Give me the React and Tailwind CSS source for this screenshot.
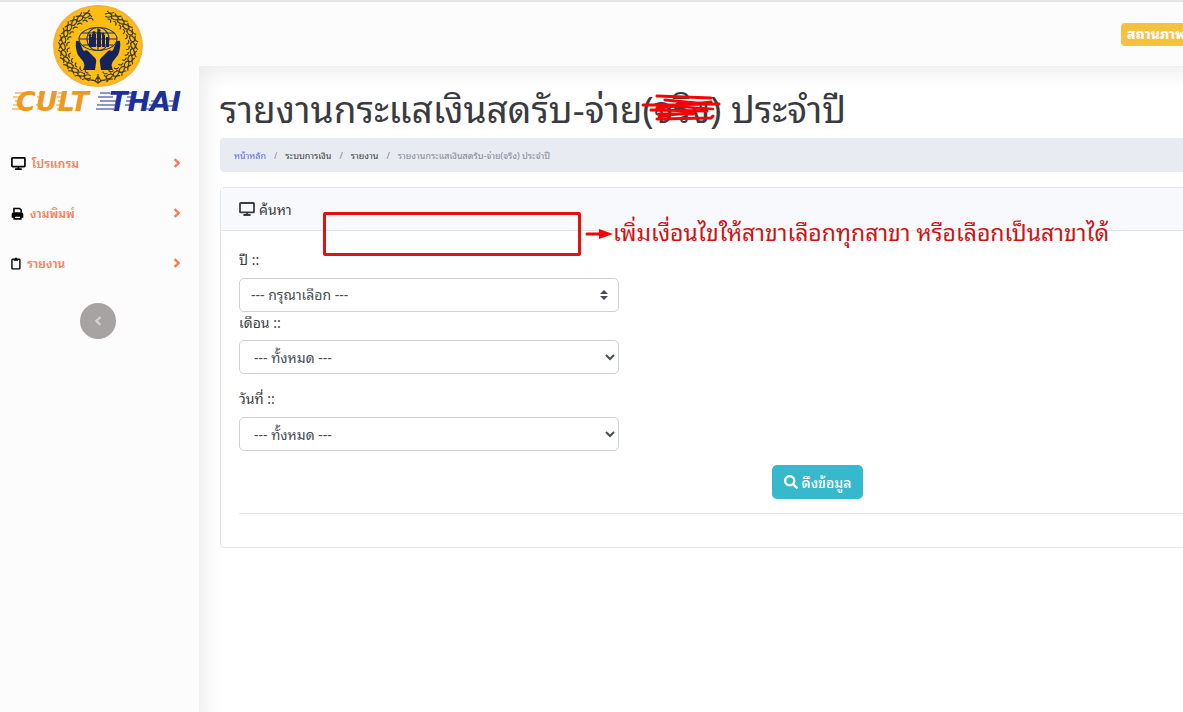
import React from 'react';
import { FaSearch } from 'react-icons/fa';

const menuItems = [
  { label: 'โปรแกรม', icon: 'monitor' },
  { label: 'งามพิมพ์', icon: 'printer' },
  { label: 'รายงาน', icon: 'clipboard' }
];

const MonitorIcon = ({ className }) => (
  <svg viewBox="0 0 16 14" className={className} fill="none" stroke="currentColor" strokeWidth="1.8" aria-hidden="true">
    <rect x="1" y="1" width="14" height="9.4" rx="0.6" />
    <path d="M8 10.4v2.4M4.4 13h7.2" />
  </svg>
);

const PrinterIcon = ({ className }) => (
  <svg viewBox="0 0 14 14" className={className} fill="none" stroke="currentColor" strokeWidth="1.7" aria-hidden="true">
    <path d="M3.2 6V1.6h6l1.8 1.8V6" />
    <path d="M1.6 10.6V7.8Q1.6 6.6 3 6.6h8Q12.4 6.6 12.4 7.8v2.8z" fill="currentColor" />
    <path d="M3.4 9.6h7.2v3.2H3.4z" fill="#fff" />
  </svg>
);

const ClipboardIcon = ({ className }) => (
  <svg viewBox="0 0 11 14" className={className} fill="none" stroke="currentColor" strokeWidth="1.5" aria-hidden="true">
    <rect x="1" y="2.4" width="8.6" height="10.4" rx="0.8" />
    <path d="M3 3.2h4.6M4.4 1.8h1.8" strokeWidth="1.8" />
  </svg>
);

const icons = { monitor: MonitorIcon, printer: PrinterIcon, clipboard: ClipboardIcon };

const Chevron = ({ className }) => (
  <svg viewBox="0 0 8 10" className={className} fill="none" stroke="currentColor" strokeWidth="2.4" aria-hidden="true">
    <path d="M1.6 1.2L5.6 5L1.6 8.8" />
  </svg>
);

// One leaf sprig of the wreath, repeated round the emblem
const leafAngles = [-162, -150, -138, -126, -114, -102, -90, -78, -66, -54, -42, -30, -18, 18, 30, 42, 54, 66, 78, 90, 102, 114, 126, 138, 150, 162];

const Hand = () => (
  <path d="M76 38q3-1 4 2l3 7 1 1q3-2 5 1l5 5q3 2 2 6l-1 7h-12q3-6-1-10l-4-5q-3-7-2-14z" />
);

const Logo = () => (
  <svg viewBox="0 0 190 116" className="block h-[116px] w-[190px]" role="img" aria-label="CULT THAI">
    <ellipse cx="98" cy="43" rx="45" ry="41" fill="#f5b335" />
    <ellipse cx="98" cy="43" rx="42.5" ry="39" fill="#fdbd12" />
    <g fill="none" stroke="#3f3a24" strokeWidth="1.2">
      {leafAngles.map((angle) => (
        <g key={angle} transform={`translate(98 43) scale(1 .92) rotate(${angle})`}>
          <path d="M-4-35q4-4 7-1q-1 4-6 3M-3-39q4 3 7-1M0-31q4-1 4 3M2-37l2 5" />
        </g>
      ))}
      <path d="M98 71v9M95 78l3-5 3 5M88 77q6-1 10 3q4-4 10-3" />
    </g>
    <g fill="none" stroke="#26335a" strokeWidth="1.1">
      <ellipse cx="98" cy="36" rx="19" ry="11.5" />
      <ellipse cx="98" cy="36" rx="11" ry="11.5" />
      <path d="M79 36h38M82 30h32M83 42h30M98 24v24" />
    </g>
    <g fill="#15245a">
      <Hand />
      <g transform="translate(196 0) scale(-1 1)">
        <Hand />
      </g>
      <path d="M89 34h3v10h-3zM92 31h4v13h-4zM97 29h4v15h-4zM102 32h3v12h-3zM106 34h3v10h-3z" />
      <circle cx="90" cy="32.5" r="1.5" />
      <circle cx="94" cy="29.5" r="1.6" />
      <circle cx="99" cy="27.5" r="1.6" />
      <circle cx="103" cy="31" r="1.5" />
    </g>
    <path
      d="M15 90h10M13 94h8M15 98h5M13 102h6M12 106h8M39 90h6M37 94h7M38 98h5M36 102h7M37 106h6M58 90h7M57 94h7M58 98h5M56 102h7M57 106h6"
      stroke="#ee9a1e"
      strokeWidth="1"
    />
    <path
      d="M100 90h10M98 94h15M100 98h16M97 102h18M96 106h18M128 90h6M127 94h6M126 98h7M125 102h7M151 98h6M149 102h6M146 106h6M169 98h6M168 103h6"
      stroke="#1d2f9a"
      strokeWidth="1"
    />
    <g fontFamily="DejaVu Sans" fontWeight="700" fontStyle="italic" fontSize="27">
      <text x="16" y="108" fill="#ee9a1e">CULT</text>
      <text x="109" y="108" fill="#1d2f9a">THAI</text>
    </g>
  </svg>
);

const Sidebar = () => (
  <aside className="w-[199px] shrink-0 bg-[#fcfcfc]">
    <a href="#home" className="block pt-px">
      <Logo />
    </a>
    <nav className="mt-[19px]">
      {menuItems.map((item) => {
        const Icon = icons[item.icon];
        return (
          <a key={item.label} href={`#${item.icon}`} className="flex h-[50px] items-center pl-[11px] pr-[18px] text-xs font-semibold text-[#fa7f60]">
            <Icon className="mr-[6px] h-[13px] w-auto text-black" />
            {item.label}
            <Chevron className="ml-auto h-[10px] w-[8px] text-[#fb7a50]" />
          </a>
        );
      })}
    </nav>
    <button type="button" aria-label="ย่อเมนู" className="ml-20 mt-[15px] flex size-9 items-center justify-center rounded-full bg-[#a8a3a3] text-[#d4d1d1]">
      <Chevron className="h-[10px] w-[8px] rotate-180" />
    </button>
  </aside>
);

// Red pen strokes over the crossed out word of the title
const Scribble = () => (
  <svg viewBox="0 0 80 30" className="absolute left-[-2px] top-[12px] h-[30px] w-[80px]" fill="none" stroke="#f30505" strokeWidth="3" strokeLinecap="round" aria-hidden="true">
    <path d="M16 3L70 5M24 7L66 11M2 12L78 11M16 15L70 9M10 17L66 18M18 21L52 21M16 26L70 25L72 23" />
    <path d="M18 24L62 17M28 13L72 16" strokeWidth="2.5" />
  </svg>
);

// Marks where the branch filter has to be added
const BranchNote = () => (
  <div className="absolute left-[102px] top-[24px] flex items-center whitespace-nowrap">
    <div className="h-[44px] w-[258px] rounded-xs border-3 border-[#e01212]" />
    <svg viewBox="0 0 28 10" className="ml-1 h-[10px] w-[28px]" aria-hidden="true">
      <path d="M2 5h14" stroke="#f30505" strokeWidth="3" strokeLinecap="round" />
      <path d="M14 0L28 5L14 10z" fill="#f30505" />
    </svg>
    <p className="pb-[6px] text-[23px] leading-8 text-[#cf1212]">เพิ่มเงื่อนไขให้สาขาเลือกทุกสาขา หรือเลือกเป็นสาขาได้</p>
  </div>
);

const selectClass = 'block h-[34px] w-full rounded-[5px] border border-[#ced2d8] bg-white pb-[2px] text-sm text-[#4a4d55]';

const SearchCard = () => (
  <section className="relative mt-[15px] rounded border border-[#e2e5ed] bg-white">
    <header className="flex h-[43px] items-center gap-1 border-b border-[#e2e5ed] bg-[#f8f9fd] px-[18px] text-sm">
      <MonitorIcon className="h-[14px] w-auto" />
      ค้นหา
    </header>
    <form className="px-[18px] pb-[33px] pt-[18px] text-sm">
      <div className="w-[380px]">
        <label htmlFor="year" className="block h-[29px] leading-5">ปี ::</label>
        <div className="relative">
          <select id="year" className={`${selectClass} appearance-none px-[11px]`}>
            <option>--- กรุณาเลือก ---</option>
          </select>
          <svg viewBox="0 0 8 10" className="pointer-events-none absolute right-[11px] top-[12px] h-[10px] w-[8px]" fill="#4a4d55" aria-hidden="true">
            <path d="M0 4L4 0L8 4zM0 6L4 10L8 6z" />
          </svg>
        </div>
        <label htmlFor="month" className="block h-[28px] leading-5">เดือน ::</label>
        <select id="month" className={`${selectClass} px-[10px]`}>
          <option>--- ทั้งหมด ---</option>
        </select>
        <label htmlFor="day" className="mt-[14px] block h-[29px] leading-5">วันที่ ::</label>
        <select id="day" className={`${selectClass} px-[10px]`}>
          <option>--- ทั้งหมด ---</option>
        </select>
      </div>
      <button type="button" className="mx-auto mt-[14px] flex h-[34px] items-center gap-1 rounded-[5px] bg-[#36b9cc] px-3 text-sm font-medium text-white">
        <FaSearch className="size-[14px]" />
        ดึงข้อมูล
      </button>
      <hr className="mt-[14px] border-[#e3e3e5]" />
    </form>
    <BranchNote />
  </section>
);

const App = () => {
  return (
    <div className="flex min-h-screen overflow-hidden border-t-2 border-[#e4e4e6] bg-[#fcfcfc] font-['Noto_Sans_Thai_Looped','Sarabun','Laksaman','Garuda','Loma','Noto_Sans_Thai','Noto_Sans',sans-serif] text-[#3a3b40]">
      <Sidebar />
      <div className="flex min-w-0 flex-1 flex-col overflow-hidden">
        <header className="flex h-16 shrink-0 justify-end overflow-hidden bg-[#fcfcfc]">
          <span className="mt-[21px] h-[23px] w-[62px] whitespace-nowrap rounded-l bg-[#f6c23e] pl-[6px] text-sm font-extrabold leading-5 text-white">สถานภาพ</span>
        </header>
        <main className="flex-1 bg-white pl-[21px] shadow-[inset_12px_12px_20px_-6px_#ececec]">
          <div className="min-w-[1195px]">
            <h1 className="h-[72px] whitespace-nowrap pt-[15px] text-[37px] leading-[52px]">
              รายงานกระแสเงินสดรับ-จ่าย
              <span className="relative inline-block">
                (จริง)
                <Scribble />
              </span>{' '}
              ประจำปี
            </h1>
            <nav aria-label="breadcrumb" className="h-[34px] rounded bg-[#e9ebf3] px-[14px] text-[9px] leading-[34px]">
              <ol className="flex gap-2">
                <li><a href="#home" className="text-[#5a6bdf]">หน้าหลัก</a></li>
                <li className="text-[#858796]">/</li>
                <li>ระบบการเงิน</li>
                <li className="text-[#858796]">/</li>
                <li>รายงาน</li>
                <li className="text-[#858796]">/</li>
                <li className="text-[#858796]">รายงานกระแสเงินสดรับ-จ่าย(จริง) ประจำปี</li>
              </ol>
            </nav>
            <SearchCard />
          </div>
        </main>
      </div>
    </div>
  );
};

export default App;
